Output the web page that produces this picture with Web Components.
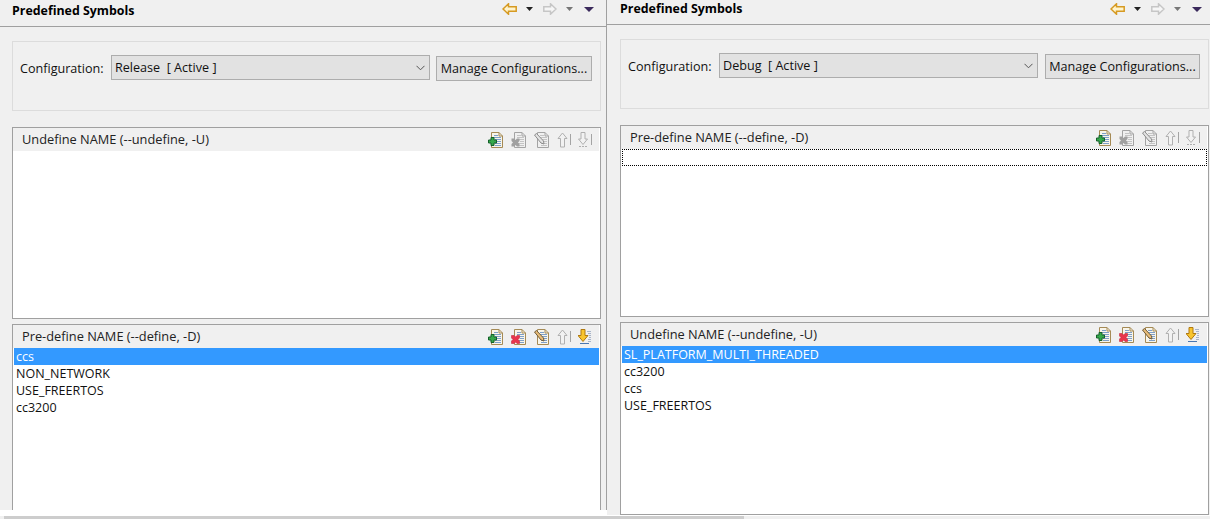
<!DOCTYPE html>
<html>
<head>
<meta charset="utf-8">
<title>Predefined Symbols</title>
<style>
  html, body { margin: 0; padding: 0; background: #fff; overflow: hidden; }
  body { font: 13px "Open Sans", "Noto Sans", sans-serif; color: #111; }
  #panes { display: flex; align-items: flex-start; height: 516px; }
  #divider { width: 1px; height: 510px; background: #a0a0a0; flex: none; }
</style>
</head>
<body>
<div id="panes">
  <prop-page style="--w:606px;--h:510px;--head:26px;--pad-l:12px;--pad-r:5px;--nav-r:12px;--btn-gap:6px;--btn-w:156px;--title-y:-3px">
    <config-bar value="Release  [ Active ]"></config-bar>
    <symbol-section heading="Undefine NAME (--undefine, -U)" actions="add"></symbol-section>
    <symbol-section class="second" heading="Pre-define NAME (--define, -D)" actions="add del edit down">
      <symbol-row selected>ccs</symbol-row>
      <symbol-row>NON_NETWORK</symbol-row>
      <symbol-row>USE_FREERTOS</symbol-row>
      <symbol-row>cc3200</symbol-row>
    </symbol-section>
  </prop-page>
  <div id="divider"></div>
  <prop-page style="--w:603px;--h:515px;--head:24px;--pad-l:13px;--pad-r:1px;--nav-r:8px;--btn-gap:7px;--btn-w:155px;--title-y:-4px">
    <config-bar value="Debug  [ Active ]"></config-bar>
    <symbol-section heading="Pre-define NAME (--define, -D)" actions="add">
      <symbol-row focused></symbol-row>
    </symbol-section>
    <symbol-section class="second" heading="Undefine NAME (--undefine, -U)" actions="add del edit down">
      <symbol-row selected>SL_PLATFORM_MULTI_THREADED</symbol-row>
      <symbol-row>cc3200</symbol-row>
      <symbol-row>ccs</symbol-row>
      <symbol-row>USE_FREERTOS</symbol-row>
    </symbol-section>
  </prop-page>
</div>
<h-scrollbar></h-scrollbar>

<script>
// document with folded corner, shared by the list actions
function docIcon(line, fill, text, extra) {
  return `<svg width="16" height="16" viewBox="0 0 16 16">
    <path d="M3.500 .5h7.500l3.500 3.500v11.500h-11z" fill="${fill}" stroke="${line}"/>
    <path d="M11 .5v3.500h3.500" fill="none" stroke="${line}"/>
    <path d="M6 3.500h4M6 5.500h7M7 7.500h6M9 9.500h4M7 11.500h6M7 13.500h6" stroke="${text}"/>
    ${extra}</svg>`;
}

const cross = "M.5 6.500h2.500l1.500 1.500 1.500-1.500h2.500v2.500l-1.500 1.500 1.500 1.500v2.500h-2.500l-1.500-1.500-1.500 1.500h-2.500v-2.500l1.500-1.500-1.500-1.500z";
const grey = "#a4a4a4";
const toolIcons = {
  add: () => docIcon("#a58a55", "#f8f5ea", "#7e9fc8",
    `<path d="M3 5.500h3v2.500h2.500v3h-2.500v2.500h-3v-2.500h-2.500v-3h2.500z" fill="#35a84a" stroke="#14602a"/>`),
  del: (on) => docIcon(on ? "#a58a55" : grey, on ? "#f8f5ea" : "#f0f0f0", on ? "#7e9fc8" : "#c4c4c4",
    on ? `<path d="${cross}" fill="#e8354d" stroke="#c42a40" stroke-width=".6"/>`
       : `<path d="${cross}" fill="#a0a0a0"/>`),
  edit: (on) => docIcon(on ? "#a58a55" : grey, on ? "#f8f5ea" : "#f0f0f0", on ? "#7e9fc8" : "#c4c4c4",
    `<path d="M.5 3l2-1.500 7 7.500 .5 3-3-1z" fill="${on ? "#e8bc78" : "#e4e4e4"}" stroke="${on ? "#6d5a3a" : "#8c8c8c"}"/>`),
  up: () => `<svg width="14" height="16" viewBox="0 0 14 16">
    <path d="M5.500 1l4.500 5.500h-2.500v8.500h-4v-8.500h-2.500z" fill="#f2f2f2" stroke="#b0b0b0"/>
    <path d="M13.500 2v11" stroke="#a4a4a4"/></svg>`,
  down: (on) => on
    ? `<svg width="14" height="16" viewBox="0 0 14 16">
      <path d="M3 .5h4v6h3l-5 6-5-6h3z" fill="#f9c52e" stroke="#b07a10"/>
      <path d="M2 14.500h9" stroke="#4a76b0"/><path d="M9 2.500h4M10 4.500h3M11 6.500h2M11 8.500h2M10 10.500h3M10 12.500h3" stroke="#a8b4c8"/></svg>`
    : `<svg width="14" height="16" viewBox="0 0 14 16">
      <path d="M3 .5h4v6.500h2.500l-4.500 5.500-4.500-5.500h2.500z" fill="#f2f2f2" stroke="#b0b0b0"/>
      <path d="M1 14.500h9" stroke="#b0b0b0" stroke-dasharray="2 1"/><path d="M13.500 2v11" stroke="#a4a4a4"/></svg>`
};

function tri(w, h, color) {
  return `<svg width="${w}" height="${h}" viewBox="0 0 ${w} ${h}"><path d="M0 0h${w}l-${w / 2} ${h}z" fill="${color}"/></svg>`;
}

class PropPage extends HTMLElement {
  connectedCallback() {
    const shadow = this.attachShadow({ mode: "open" });
    shadow.innerHTML = `
      <style>
        :host { display: block; flex: none; width: var(--w); height: var(--h); overflow: hidden; background: #f0f0f0; box-sizing: border-box; }
        .head { display: flex; align-items: center; height: var(--head); border-bottom: 1px solid #a0a0a0; padding: 0 var(--nav-r) 0 12px; }
        .title { font-weight: 700; font-size: 12.400px; flex: 1; padding-left: calc(var(--pad-l) - 12px); position: relative; top: var(--title-y); color: #000; }
        .nav { display: flex; align-items: flex-start; height: 100%; }
        .nav svg { display: block; }
        .back { margin-top: 3px; }
        .t1 { margin: 7px 0 0 9px; }
        .fwd { margin: 3px 0 0 10px; }
        .t2 { margin: 7px 0 0 9px; }
        .t3 { margin: 7px 0 0 11px; }
        .body { display: flex; flex-direction: column; padding: 14px var(--pad-r) 0 var(--pad-l); }
      </style>
      <div class="head">
        <span class="title">Predefined Symbols</span>
        <div class="nav">
          <svg class="back" width="15" height="12" viewBox="0 0 15 12"><path d="M1 6l5.500-5.200v2.900h7.700v4.600h-7.700v2.900z" fill="#fff4cc" stroke="#d69a22" stroke-width="1.500"/></svg>
          <span class="t1">${tri(7, 4, "#222")}</span>
          <svg class="fwd" width="14" height="12" viewBox="0 0 14 12"><path d="M13 6l-5.500-5.200v2.900h-6.700v4.600h6.700v2.900z" fill="#f6f6f6" stroke="#c6c6c6" stroke-width="1.500"/></svg>
          <span class="t2">${tri(7, 4, "#777")}</span>
          <span class="t3">${tri(10, 5, "#3b2a5c")}</span>
        </div>
      </div>
      <div class="body"><slot></slot></div>`;
  }
}

class ConfigBar extends HTMLElement {
  connectedCallback() {
    const shadow = this.attachShadow({ mode: "open" });
    shadow.innerHTML = `
      <style>
        :host { display: flex; align-items: flex-start; box-sizing: border-box; height: 70px; border: 1px solid #dcdcdc; padding: 13px 0 0 7px; margin-bottom: 16px; font-size: 12.600px; }
        label { flex: 0 0 91px; line-height: 27px; height: 25px; }
        .combo { flex: 0 0 319px; box-sizing: border-box; height: 25px; background: #e2e2e2; border: 1px solid #adadad; display: flex; align-items: center; justify-content: space-between; padding: 0 4px 0 3px; white-space: pre; }
        button { all: unset; box-sizing: border-box; flex: 0 0 var(--btn-w); width: var(--btn-w); margin: 1px 0 0 var(--btn-gap); height: 25px; background: #e2e2e2; border: 1px solid #adadad; text-align: center; font: inherit; line-height: 22px; }
      </style>
      <label>Configuration:</label>
      <div class="combo"><span>${this.getAttribute("value")}</span>
        <svg width="9" height="6" viewBox="0 0 9 6"><path d="M.5 .8l4 4 4-4" fill="none" stroke="#555"/></svg></div>
      <button>Manage Configurations...</button>`;
  }
}

class SymbolSection extends HTMLElement {
  connectedCallback() {
    const on = (this.getAttribute("actions") || "").split(" ");
    const has = (name) => on.includes(name);
    const shadow = this.attachShadow({ mode: "open" });
    shadow.innerHTML = `
      <style>
        :host { display: block; box-sizing: border-box; height: 192px; border: 1px solid #a0a0a0; background: #fff; font-size: 12.800px; }
        :host(.second) { margin-top: 5px; height: 193px; }
        .bar { display: flex; align-items: center; height: 23px; background: #f0f0f0; margin-right: 1px; padding: 0 7px 0 9px; }
        .name { flex: 1; color: #222; padding-bottom: 2px; }
        .tools { display: flex; align-items: center; gap: 7px; }
        .tools svg { display: block; }
        .list { padding: 0 1px; }
      </style>
      <div class="bar">
        <span class="name">${this.getAttribute("heading")}</span>
        <div class="tools">
          ${toolIcons.add()}${toolIcons.del(has("del"))}${toolIcons.edit(has("edit"))}${toolIcons.up()}${toolIcons.down(has("down"))}
        </div>
      </div>
      <div class="list"><slot></slot></div>`;
  }
}

class SymbolRow extends HTMLElement {
  connectedCallback() {
    const shadow = this.attachShadow({ mode: "open" });
    shadow.innerHTML = `
      <style>
        :host { display: block; box-sizing: border-box; height: 17px; line-height: 17px; padding-left: 2px; font-size: 12.500px; color: #111; white-space: nowrap; }
        :host([selected]) { background: #3399ff; color: #fff; }
        :host([focused]) { outline: 1px dotted #000; outline-offset: -1px; }
      </style>
      <slot></slot>`;
  }
}

class HScrollbar extends HTMLElement {
  connectedCallback() {
    const shadow = this.attachShadow({ mode: "open" });
    shadow.innerHTML = `
      <style>
        :host { display: block; height: 3px; background: #f0f0f0; padding-left: 4px; }
        div { width: 740px; height: 3px; background: #cdcdcd; }
      </style>
      <div></div>`;
  }
}

customElements.define("prop-page", PropPage);
customElements.define("config-bar", ConfigBar);
customElements.define("symbol-section", SymbolSection);
customElements.define("symbol-row", SymbolRow);
customElements.define("h-scrollbar", HScrollbar);
</script>
</body>
</html>
